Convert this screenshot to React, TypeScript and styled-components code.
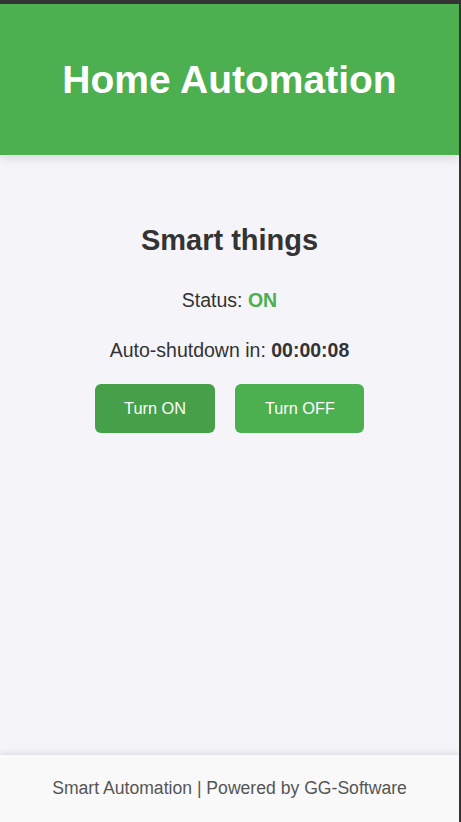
import React from "react";
import styled, { createGlobalStyle } from "styled-components";

const GlobalStyle = createGlobalStyle`
  html, body {
    margin: 0;
    padding: 0;
    background: #f4f4f9;
  }
  body {
    font-family: "Liberation Sans", Arial, Helvetica, sans-serif;
    color: #333;
  }
  * { box-sizing: border-box; }
`;

const Frame = styled.div`
  min-height: 822px;
  height: 822px;
  display: flex;
  flex-direction: column;
  border-top: 4px solid #333;
  border-right: 2px solid #333;
  background: #f4f4f9;
  overflow: hidden;
`;

const Header = styled.header`
  position: relative;
  z-index: 2;
  height: 151px;
  flex: none;
  display: flex;
  align-items: center;
  justify-content: center;
  background: #4caf50;
  box-shadow: 0 3px 10px rgba(0, 0, 0, 0.12);
`;

const Title = styled.h1`
  margin: 0;
  font-size: 39px;
  font-weight: 700;
  color: #fff;
  line-height: 45px;
`;

const Main = styled.main`
  flex: 1;
  display: flex;
  flex-direction: column;
  align-items: center;
  padding-top: 69px;
`;

const Heading = styled.h2`
  margin: 0 0 32px;
  font-size: 29px;
  font-weight: 700;
  line-height: 33px;
  color: #333;
`;

const Line = styled.p<{ $gap: number }>`
  margin: 0 0 ${(p) => p.$gap}px;
  font-size: 19.5px;
  line-height: 22.5px;
  color: #333;
`;

const StatusValue = styled.strong`
  color: #4caf50;
  font-weight: 700;
`;

const Timer = styled.strong`
  font-weight: 700;
  color: #333;
`;

const ButtonRow = styled.div`
  display: flex;
  gap: 20px;
`;

const ActionButton = styled.button<{ $active?: boolean }>`
  height: 49px;
  padding: 0 29.5px;
  border: none;
  border-radius: 6px;
  background: ${(p) => (p.$active ? "#45a049" : "#4caf50")};
  color: #fff;
  font-family: "Liberation Sans", Arial, sans-serif;
  font-size: 16.3px;
  cursor: pointer;
`;

const Footer = styled.footer`
  position: relative;
  z-index: 2;
  height: 67px;
  flex: none;
  display: flex;
  align-items: center;
  justify-content: center;
  background: #f9f9f9;
  box-shadow: 0 -2px 6px rgba(0, 0, 0, 0.1);
  font-size: 17.6px;
  color: #555;
`;

export default function App() {
  return (
    <>
      <GlobalStyle />
      <Frame>
        <Header>
          <Title>Home Automation</Title>
        </Header>
        <Main>
          <Heading>Smart things</Heading>
          <Line $gap={27}>
            Status: <StatusValue>ON</StatusValue>
          </Line>
          <Line $gap={23}>
            Auto-shutdown in: <Timer>00:00:08</Timer>
          </Line>
          <ButtonRow>
            <ActionButton $active>Turn ON</ActionButton>
            <ActionButton>Turn OFF</ActionButton>
          </ButtonRow>
        </Main>
        <Footer>Smart Automation | Powered by GG-Software</Footer>
      </Frame>
    </>
  );
}
